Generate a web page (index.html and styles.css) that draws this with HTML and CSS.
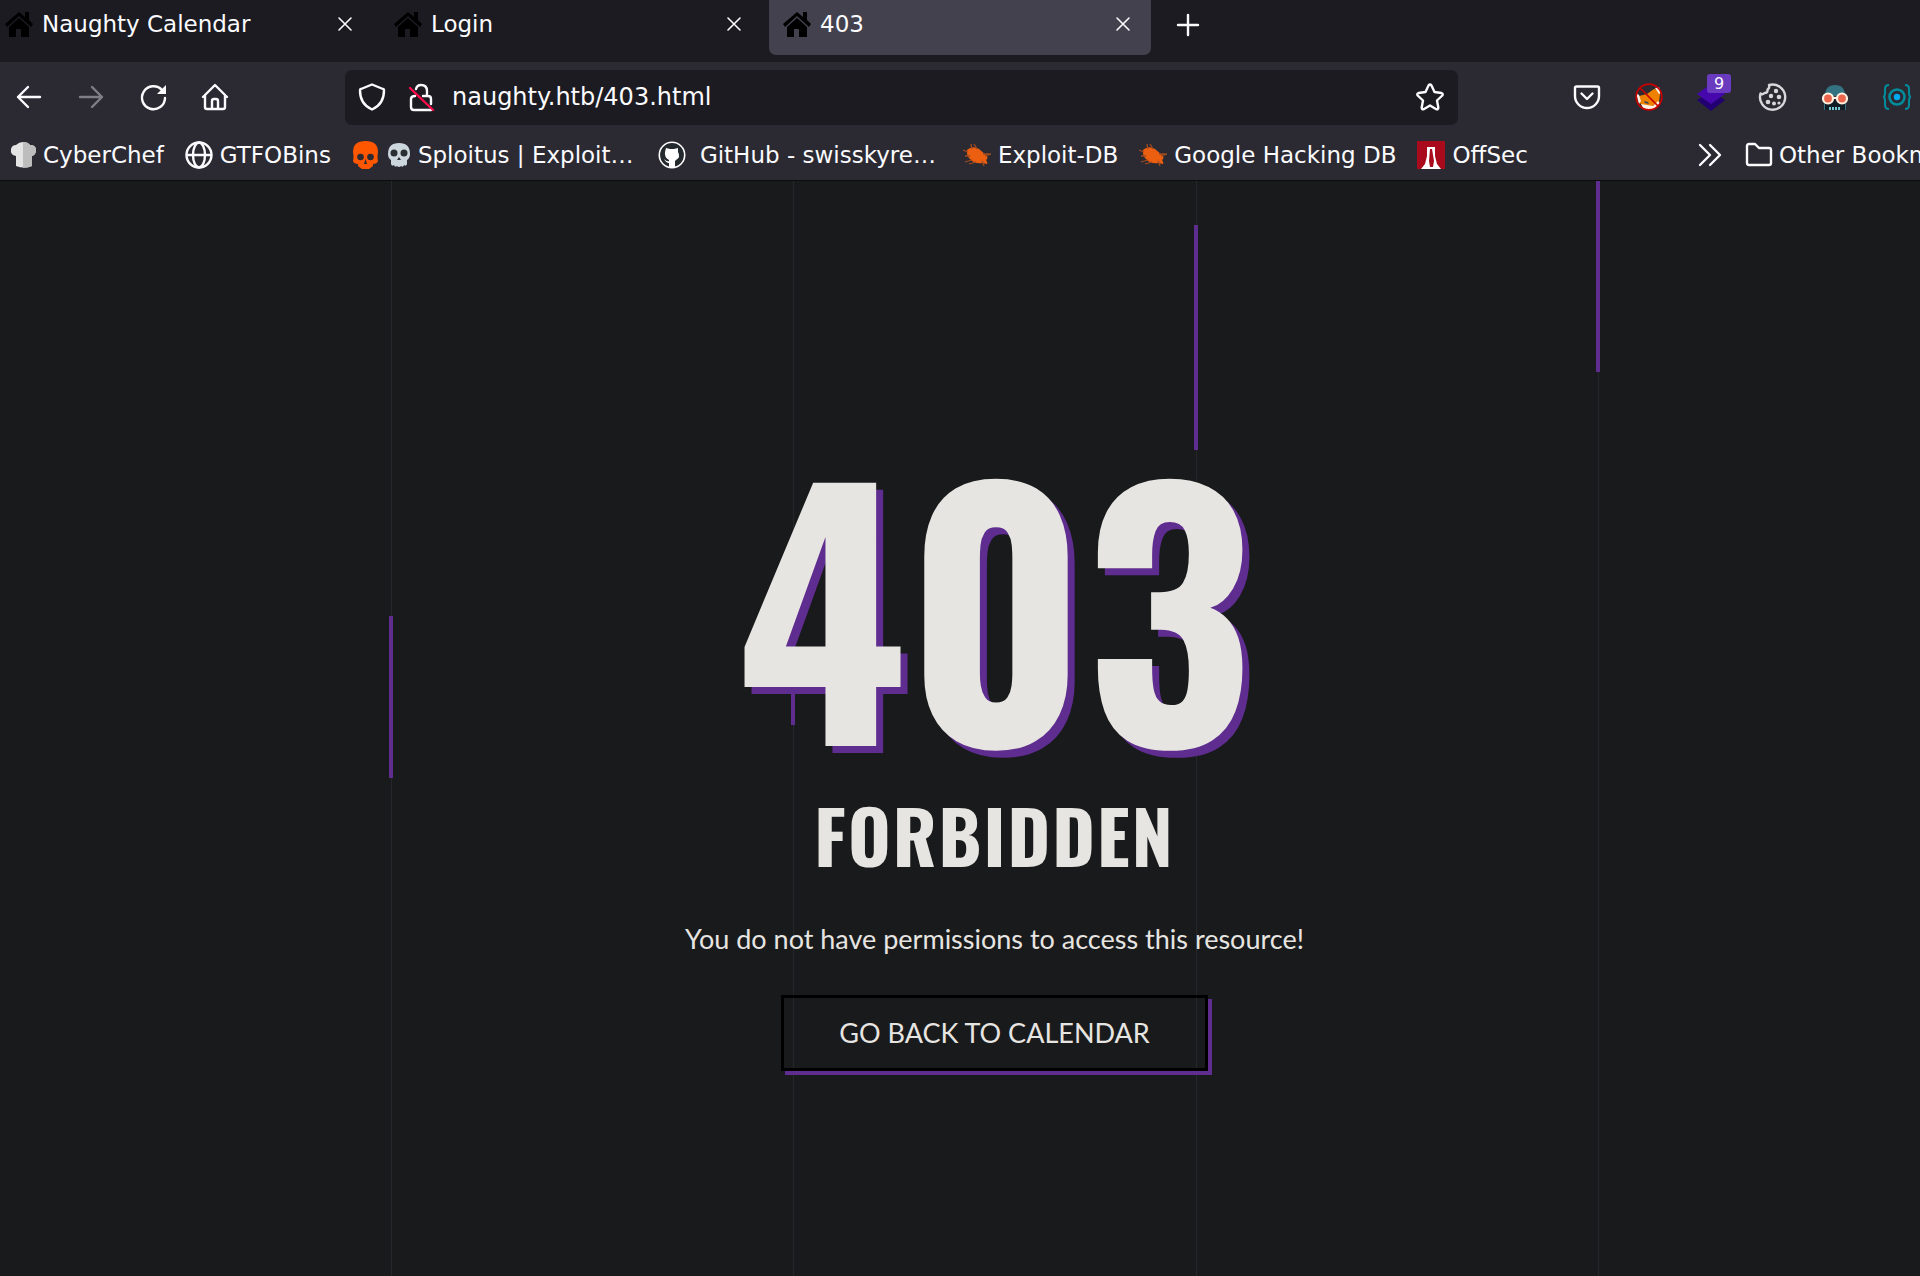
FILE: index.html
```html
<!DOCTYPE html>
<html lang="en">
<head>
<meta charset="utf-8">
<title>403</title>
<link rel="stylesheet" href="styles.css">
</head>
<body>
<svg class="defs" width="0" height="0" aria-hidden="true">
  <symbol id="house" viewBox="0 0 28 28"><path d="M14 2 0 14l2 3L14 6l12 11 2-3-4-4V2h-4v5z"/><path d="M14 8 4 17v9.500q0 .5.500.5H11v-8h5v8h7.500q.5 0 .5-.5V17z"/></symbol>
  <symbol id="close" viewBox="0 0 28 28"><path d="m8 8 12 12M20 8 8 20" fill="none" stroke="#fbfbfe" stroke-width="1.600" stroke-linecap="round"/></symbol>
  <symbol id="bug" viewBox="0 0 28 28"><path d="M4 9q5-5 12-1l7 6q3 3 0 5 2 3 1 4l-5-1q-7 1-11-3-5-4-4-10z" fill="#ec5e10"/><path d="m9 8-1-5M14 8l-3-5M20 13l8 0-6 2M5 11 0 9M7 15l-5 0M9 19l-7 2M13 21l-7 2M19 20l2 5" fill="none" stroke="#9d4a20" stroke-width="1.300"/></symbol>
</svg>
<header class="chrome">
  <nav class="tabs" aria-label="Tabs">
    <div class="tab"><svg class="icon"><use href="#house"/></svg><span class="label">Naughty Calendar</span><button aria-label="Close tab"><svg class="icon"><use href="#close"/></svg></button></div>
    <div class="tab"><svg class="icon"><use href="#house"/></svg><span class="label">Login</span><button aria-label="Close tab"><svg class="icon"><use href="#close"/></svg></button></div>
    <div class="tab active"><svg class="icon"><use href="#house"/></svg><span class="label">403</span><button aria-label="Close tab"><svg class="icon"><use href="#close"/></svg></button></div>
    <button class="new-tab" aria-label="New tab"><svg class="icon line" viewBox="0 0 28 28"><path d="M14 4v20M4 14h20"/></svg></button>
  </nav>
  <div class="toolbar">
    <div class="actions">
      <button aria-label="Back"><svg class="icon line" viewBox="0 0 28 28"><path d="M25 14H3M13 4 3 14l10 10"/></svg></button>
      <button aria-label="Forward" disabled><svg class="icon line" viewBox="0 0 28 28"><path d="M3 14h22M15 4l10 10-10 10"/></svg></button>
      <button aria-label="Reload"><svg class="icon line" viewBox="0 0 28 28"><path d="M26 15A11.500 11.500 0 1 1 23 7"/><path d="M27 2v9h-9z" fill="#fbfbfe" stroke="none"/></svg></button>
      <button aria-label="Home"><svg class="icon line" viewBox="0 0 28 28"><path d="M2 14 14 2l12 12M4 12v12q0 2 2 2h16q2 0 2-2V12M11 26v-8q0-2 2-2h2q2 0 2 2v8"/></svg></button>
    </div>
    <div class="address">
      <svg class="icon line" viewBox="0 0 28 28"><path d="M14 1.500 3 6q-1 0-1 1.500C2 17 6 23 14 26.500 22 23 26 17 26 7.500 26 6 25 6 25 6z"/></svg>
      <svg class="icon line" viewBox="0 0 28 28"><path d="M9 6q1-4 5-4 6 0 6 6v5M8 13q-4 0-4 3v8q0 3 3 3h17M16 13h5q3 0 3 3v5"/><path d="m3 5 23 22" stroke="#ff0d4b"/></svg>
      <input type="text" aria-label="Address" value="naughty.htb/403.html">
      <button aria-label="Bookmark this page"><svg class="icon line" viewBox="0 0 28 28"><path d="M12.500 2.500q1.500-2 3 0l3 6.500 7 1q2 .8.8 2.500l-5.300 5 1.300 7q0 2.300-2 1.700L14 22.500l-6.300 3.700q-2 .6-2-1.700l1.300-7-5.300-5Q.5 10.800 2.500 10l7-1z"/></svg></button>
    </div>
    <div class="extensions">
      <button aria-label="Pocket"><svg class="icon line" viewBox="0 0 28 28"><path d="M3.500 3.500h21q1.500 0 1.500 1.500v8a12 12 0 0 1-24 0V5q0-1.500 1.500-1.500zM8.500 10.500l5.500 5.500 5.500-5.500"/></svg></button>
      <button aria-label="FoxyProxy"><svg class="icon" viewBox="0 0 28 28"><path d="m4 13 8-2 7-5 5 1 1 4-1 8-8 5-9-2-4-4z" fill="#ee8200"/><path d="m20 5 4-1 2 6-2 1zM1 10l3 2 2 6-2 3zM6 21l6 1 6 1 5-5 2 2-4 5-7 2-6-2z" fill="#fff3e6"/><path d="m9 18 4 1 1 2-4-1z" fill="#35445c"/><circle cx="14" cy="14" r="12.800" fill="none" stroke="#c80000" stroke-width="1.700"/><path d="m5 5 18 18" stroke="#c80000" stroke-width="1.700"/></svg></button>
      <button class="layers" aria-label="Wappalyzer"><svg class="icon" viewBox="0 0 28 28"><path d="m14 9 14 8-14 11L0 17z" fill="#220071"/><path d="m14 1 14 10-14 10L0 11z" fill="#4608ad"/></svg><span class="badge">9</span></button>
      <button aria-label="Cookie Editor"><svg class="icon" viewBox="0 0 28 28"><path d="M10 2q1 3-1.500 4.500Q9 10 5.500 10 3.500 12 1.500 10.500A12.600 12.600 0 1 0 10 2z" fill="none" stroke="#d8d8dc" stroke-width="2.400" stroke-linejoin="round"/><g fill="#d8d8dc"><circle cx="17" cy="8" r="2.200"/><circle cx="12" cy="13" r="2.200"/><circle cx="20" cy="14" r="2.300"/><circle cx="9" cy="19" r="2.300"/><circle cx="15" cy="20.500" r="2"/><circle cx="20" cy="20" r="1.600"/></g></svg></button>
      <button aria-label="User-Agent Switcher"><svg class="icon" viewBox="0 0 28 28"><path d="M4 13q0-11 10-11t10 11z" fill="#347281"/><path d="M3 16h22v11H3z" fill="#101d25"/><path d="M3.500 19v8M24.500 19v8" stroke="#347281"/><path d="M8 25.500h12" stroke="#72cbd0" stroke-width="3" stroke-dasharray="2 1"/><g fill="#ed644d" stroke="#fff0df" stroke-width="2.200"><circle cx="7" cy="15.500" r="5"/><circle cx="21" cy="15.500" r="5"/><path d="M12 15h4"/></g></svg></button>
      <button aria-label="Code Inspector"><svg class="icon" viewBox="0 0 28 28" fill="none" stroke="#008c9b" stroke-width="2"><path d="M6 2q-4 0-4 4v4q0 4-2 4 2 0 2 4v4q0 4 4 4M22 2q4 0 4 4v4q0 4 2 4-2 0-2 4v4q0 4-4 4"/><circle cx="14" cy="14" r="7.500" stroke-width="2.600"/><circle cx="14" cy="14" r="3.200" fill="#00a9f4" stroke="none"/></svg></button>
    </div>
  </div>
  <nav class="bookmarks" aria-label="Bookmarks">
    <a href="#"><svg class="icon" viewBox="0 0 28 28"><path d="M8 25V15Q2 14 3 8q1-4 5-4 3-3 7-3 5 0 7 3 6 0 6 5 0 5-4 6v10q-8 3-16 0z" fill="#e4e4e4"/><path d="M15 1q5 0 7 3 6 0 6 5 0 5-4 6v10q-4 2-9 2z" fill="#bdbdbd"/></svg>CyberChef</a>
    <a href="#"><svg class="icon line" viewBox="0 0 28 28"><circle cx="14" cy="14" r="12.500"/><ellipse cx="14" cy="14" rx="6" ry="12.500"/><path d="M2 14h24"/></svg>GTFOBins</a>
    <a href="#" class="sploitus"><svg class="icon" viewBox="0 0 28 28"><path d="M1 20q1-3 0-9Q1 0 13.500 0T26 11q-1 6 0 9-1 3-5 3v2l-4 3h-7l-4-3v-2q-4 0-5-3z" fill="#ff5700"/><g fill="#2b2a33"><circle cx="8.500" cy="16" r="3.300"/><circle cx="18.500" cy="16" r="3.300"/><path d="m13.500 18 1.500 5h-3z"/></g></svg><svg class="icon emoji" viewBox="0 0 24 28"><path d="M1 13Q1 2 12 2t11 11q0 4-3 6v4q-1 3-3 1-1 3-3 1-2 2-4 0-2 2-3-1-2 2-3-1v-4q-3-2-3-6z" fill="#ccd6dd"/><g fill="#292f33"><circle cx="7" cy="12" r="3.500"/><circle cx="17" cy="12" r="3.500"/><path d="m12 16 2 3h-4z"/></g></svg><span>Sploitus | Exploit…</span></a>
    <a href="#" class="github"><svg class="icon" viewBox="0 0 28 28"><circle cx="14" cy="14" r="12.700" fill="#24292e" stroke="#fff" stroke-width="1.600"/><path d="m8 7 4 1h4l4-1v4q3 5-2 8l-1 1v6h-6v-4q-3 0-5-4 3 3 5 2v-1q-5-3-4-8z" fill="#fff"/></svg><span>GitHub - swisskyre…</span></a>
    <a href="#"><svg class="icon"><use href="#bug"/></svg>Exploit-DB</a>
    <a href="#"><svg class="icon"><use href="#bug"/></svg>Google Hacking DB</a>
    <a href="#"><svg class="icon" viewBox="0 0 28 28"><path d="M0 0h28v28H0z" fill="#aa0b1c"/><path d="M10 6h8v9l2 8 4 5H4l4-5 2-8z" fill="#fff"/><path d="m13 8-1 12 1 6h3l1-6-2-12z" fill="#aa0b1c"/></svg>OffSec</a>
    <button class="more" aria-label="More bookmarks"><svg class="icon line" viewBox="0 0 28 28"><path d="m4 4 10 10L4 24M14 4l10 10-10 10"/></svg></button>
    <a href="#" class="other"><svg class="icon line" viewBox="0 0 28 28"><path d="M2 5q0-2 2-2h6l4 4h10q2 0 2 2v13q0 2-2 2H4q-2 0-2-2z"/></svg>Other Bookmarks</a>
  </nav>
</header>
<main class="page">
  <div class="stage">
    <div class="rails" aria-hidden="true">
      <div class="rail"><i class="drop first"></i></div>
      <div class="rail"><i class="drop second"></i></div>
      <div class="rail"><i class="drop third"></i></div>
      <div class="rail"><i class="drop fourth"></i></div>
    </div>
    <section class="message">
      <h1>403</h1>
      <h2>FORBIDDEN</h2>
      <p>You do not have permissions to access this resource!</p>
      <a class="back" href="#">GO BACK TO CALENDAR</a>
    </section>
  </div>
</main>
</body>
</html>
```
FILE: styles.css
```css
* { box-sizing: border-box; }
body {
  margin: 0;
  min-height: 100vh;
  display: flex;
  flex-direction: column;
  background: #191a1c;
  color: #fbfbfe;
  font: 23px/32px "DejaVu Sans", sans-serif;
  overflow-x: hidden;
}
.defs { position: absolute; }
button { border: 0; padding: 0; background: none; color: inherit; font: inherit; display: flex; }
a { color: inherit; text-decoration: none; }
.icon { width: 28px; height: 28px; flex: none; display: block; overflow: visible; }
.line { fill: none; stroke: #fbfbfe; stroke-width: 2.4; stroke-linecap: round; stroke-linejoin: round; }

.chrome { background: #2b2a33; border-bottom: 1px solid #0c0c0d; overflow: hidden; white-space: nowrap; }
.tabs { display: flex; gap: 7px; height: 62px; padding-bottom: 7px; margin-left: -9px; background: #1c1b22; }
.tab { display: flex; align-items: center; gap: 9px; width: 382px; padding: 0 14px 7px; border-radius: 0 0 7px 7px; }
.tab.active { background: #42414d; }
.tab .label { flex: 1; }
.new-tab { align-items: center; padding: 0 16px 5px; }

.toolbar { display: flex; align-items: center; height: 70px; padding: 0 9px 0 15px; }
.actions, .extensions { display: flex; gap: 34px; }
.actions { width: 330px; }
.actions button:disabled { opacity: .4; }
.address { display: flex; align-items: center; flex: 1; height: 55px; padding: 0 14px 0 13px; gap: 21px; border-radius: 7px; background: #1c1b22; }
.address input { flex: 1; min-width: 0; margin-left: -4px; padding: 0; border: 0; background: none; color: inherit; font: inherit; font-size: 24px; outline: 0; }
.extensions { margin-left: 115px; }
.layers { position: relative; }
.badge { position: absolute; left: 10px; top: -9px; width: 24px; height: 19px; border-radius: 3px; background: #6a3abf; font-size: 16px; line-height: 19px; text-align: center; }

.bookmarks { display: flex; align-items: center; height: 48px; padding: 0 0 2px 8px; gap: 21px; }
.bookmarks a { display: flex; align-items: center; flex: none; gap: 7px; }
.bookmarks .sploitus { width: 285px; }
.bookmarks .emoji { width: 24px; }
.bookmarks .github { width: 284px; gap: 14px; }
.more { margin-left: auto; }
.bookmarks .other { width: 175px; gap: 6px; overflow: hidden; }

.page { flex: 1; display: flex; overflow: hidden; color: #e7e5e1; font-family: Lato, sans-serif; }
.stage { position: relative; flex: none; width: calc(100% + 93px); margin-left: -11px; display: flex; justify-content: center; }
.rails { position: absolute; inset: 0; display: grid; grid-template-columns: repeat(5, 1fr); }
.rail { position: relative; border-right: 1px solid #26272a; }
.drop { position: absolute; right: -2px; width: 4px; background: #5f2c8f; }
.first { top: 435px; height: 162px; }
.second { top: 382px; height: 162px; }
.third { top: 44px; height: 225px; }
.fourth { top: 0; height: 191px; }
.message { position: relative; display: flex; flex-direction: column; align-items: center; padding: 256px 2px 0 0; }
h1, h2 { margin: 0; font-family: Oswald, "Roboto Condensed", "Liberation Sans Narrow", sans-serif; font-weight: 700; }
h1 { font-size: 325px; line-height: 325px; text-shadow: 7px 7px #5f2c8f; }
h2 { margin-top: 32px; font-size: 73px; line-height: 80px; letter-spacing: 2px; }
p { margin: 45px 0 36px; font-size: 27px; line-height: 40px; }
.back { padding: 16px 55px; border: 3px solid #000; box-shadow: 4px 4px #5f2c8f; font-size: 27px; line-height: 38px; }
```
